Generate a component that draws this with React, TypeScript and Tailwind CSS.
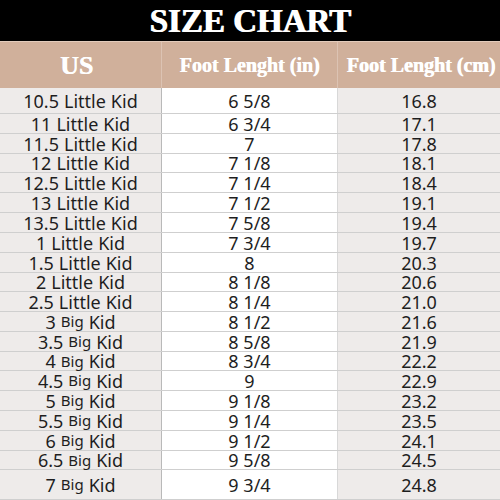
const ROWS: { us: string; kind: 'Little' | 'Big'; inch: string; cm: string; h: string }[] = [
  { us: '10.5', kind: 'Little', inch: '6 5/8', cm: '16.8', h: 'h-[26px]' },
  { us: '11', kind: 'Little', inch: '6 3/4', cm: '17.1', h: 'h-[20px]' },
  { us: '11.5', kind: 'Little', inch: '7', cm: '17.8', h: 'h-[20px]' },
  { us: '12', kind: 'Little', inch: '7 1/8', cm: '18.1', h: 'h-[19px]' },
  { us: '12.5', kind: 'Little', inch: '7 1/4', cm: '18.4', h: 'h-[20px]' },
  { us: '13', kind: 'Little', inch: '7 1/2', cm: '19.1', h: 'h-[20px]' },
  { us: '13.5', kind: 'Little', inch: '7 5/8', cm: '19.4', h: 'h-[20px]' },
  { us: '1', kind: 'Little', inch: '7 3/4', cm: '19.7', h: 'h-[20px]' },
  { us: '1.5', kind: 'Little', inch: '8', cm: '20.3', h: 'h-[20px]' },
  { us: '2', kind: 'Little', inch: '8 1/8', cm: '20.6', h: 'h-[19px]' },
  { us: '2.5', kind: 'Little', inch: '8 1/4', cm: '21.0', h: 'h-[20px]' },
  { us: '3', kind: 'Big', inch: '8 1/2', cm: '21.6', h: 'h-[20px]' },
  { us: '3.5', kind: 'Big', inch: '8 5/8', cm: '21.9', h: 'h-[20px]' },
  { us: '4', kind: 'Big', inch: '8 3/4', cm: '22.2', h: 'h-[19px]' },
  { us: '4.5', kind: 'Big', inch: '9', cm: '22.9', h: 'h-[20px]' },
  { us: '5', kind: 'Big', inch: '9 1/8', cm: '23.2', h: 'h-[20px]' },
  { us: '5.5', kind: 'Big', inch: '9 1/4', cm: '23.5', h: 'h-[20px]' },
  { us: '6', kind: 'Big', inch: '9 1/2', cm: '24.1', h: 'h-[20px]' },
  { us: '6.5', kind: 'Big', inch: '9 5/8', cm: '24.5', h: 'h-[19px]' },
  { us: '7', kind: 'Big', inch: '9 3/4', cm: '24.8', h: 'h-[30px]' },
];

export default function App() {
  return (
    <div className="w-[500px] h-[500px] overflow-hidden bg-white">
      {/* Title */}
      <div className="h-[42px] bg-black flex items-center justify-center border-b border-[#e2cbbb]">
        <span className="text-white font-bold text-[33px] leading-none pt-[2px] font-['Liberation_Serif',serif] [text-shadow:1px_0_0_#fff]">
          SIZE CHART
        </span>
      </div>

      {/* Header */}
      <div className="h-[46px] bg-[#d0b09b] grid grid-cols-[162px_176px_162px] text-white font-bold font-['Liberation_Serif',serif] [text-shadow:0.6px_0_0_#fff]">
        <div className="flex items-center justify-center pr-[8px] text-[26px] border-r border-[#dcc3b3]">US</div>
        <div className="flex items-center justify-center text-[20px] border-r border-[#dcc3b3] whitespace-nowrap">Foot Lenght (in)</div>
        <div className="flex items-center justify-center pl-[4px] text-[20px] whitespace-nowrap">Foot Lenght (cm)</div>
      </div>

      {/* Rows */}
      <div className="font-['Noto_Sans',sans-serif] text-[#1e1e1e] text-[18px] leading-none">
        {ROWS.map((r) => (
          <div key={r.us} className={`grid grid-cols-[162px_176px_162px] border-b border-[#cfcfcf] ${r.h}`}>
            <div className="bg-[#eeebea] border-r border-[#b9b9b9] flex items-center justify-center whitespace-nowrap">
              {r.us}{' '}
              {r.kind === 'Big' ? <span className="text-[15px] mx-[5px]">Big</span> : <span className="mx-[5px]">Little</span>}
              Kid
            </div>
            <div className="bg-white border-r border-[#d8d8d8] flex items-center justify-center whitespace-nowrap">
              {r.inch}
            </div>
            <div className="bg-[#eeebea] flex items-center justify-center">{r.cm}</div>
          </div>
        ))}
      </div>
    </div>
  );
}
